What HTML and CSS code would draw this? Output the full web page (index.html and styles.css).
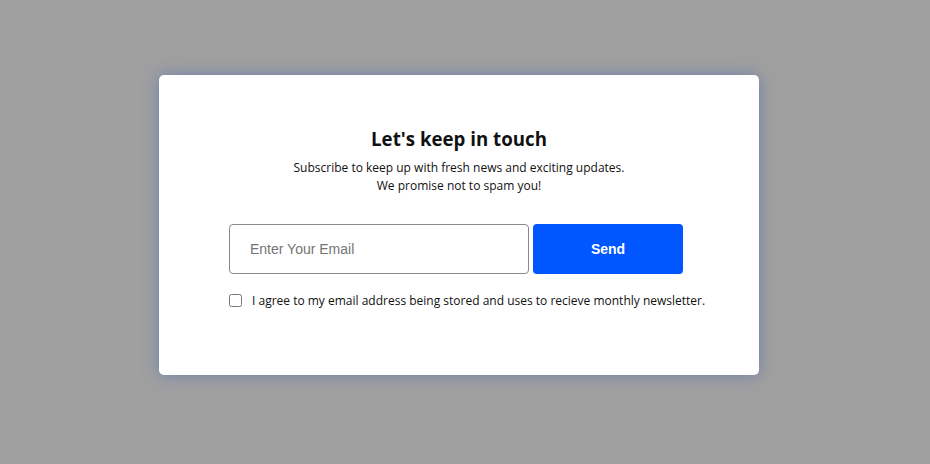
FILE: index.html
```
<!DOCTYPE html>
<html>
<head>
<meta charset="utf-8">
<link rel="stylesheet" href="styles.css">
</head>
<body>
<div class="overlay">
  <div class="card">
    <h1 class="title">Let's keep in touch</h1>
    <p class="subtitle">Subscribe to keep up with fresh news and exciting updates.<br>We promise not to spam you!</p>
    <form class="form">
      <div class="row">
        <input class="email" type="email" placeholder="Enter Your Email">
        <button class="send" type="button">Send</button>
      </div>
      <label class="agree">
        <input class="check" type="checkbox">
        <span>I agree to my email address being stored and uses to recieve monthly newsletter.</span>
      </label>
    </form>
  </div>
</div>
</body>
</html>
```
FILE: styles.css
```
* { box-sizing: border-box; }
html, body { margin: 0; padding: 0; }
body { background: #a0a0a0; font-family: "Open Sans", sans-serif; }
.overlay {
  width: 930px;
  height: 464px;
  padding: 75px 0 0 159px;
}
.card {
  width: 600px;
  height: 300px;
  background: #fff;
  border-radius: 5px;
  box-shadow: 0 0 16px rgba(60, 100, 180, 0.5);
  display: flex;
  flex-direction: column;
  align-items: center;
  padding-top: 51px;
}
.title {
  margin: 0;
  font-size: 18.7px;
  font-weight: 700;
  line-height: 25px;
  color: #111;
}
.subtitle {
  margin: 8px 0 0;
  font-size: 12px;
  line-height: 18px;
  text-align: center;
  color: #111;
}
.form {
  margin: 29px 0 0 70px;
  align-self: flex-start;
  display: flex;
  flex-direction: column;
}
.row { display: flex; gap: 4px; }
.email {
  width: 300px;
  height: 50px;
  border: 1px solid #8a8a8a;
  border-radius: 4px;
  padding: 0 20px;
  font-family: "Liberation Sans", Arial, sans-serif;
  font-size: 14px;
  color: #333;
  outline: none;
}
.email::placeholder { color: #757575; }
.send {
  width: 150px;
  height: 50px;
  border: none;
  border-radius: 4px;
  background: #0057ff;
  color: #fff;
  font-family: "Liberation Sans", Arial, sans-serif;
  font-size: 14px;
  font-weight: 700;
}
.agree {
  margin-top: 18px;
  display: flex;
  align-items: center;
  font-size: 12px;
  color: #111;
  white-space: nowrap;
}
.check {
  margin: 0 10px 0 0;
  width: 13px;
  height: 13px;
}
```
